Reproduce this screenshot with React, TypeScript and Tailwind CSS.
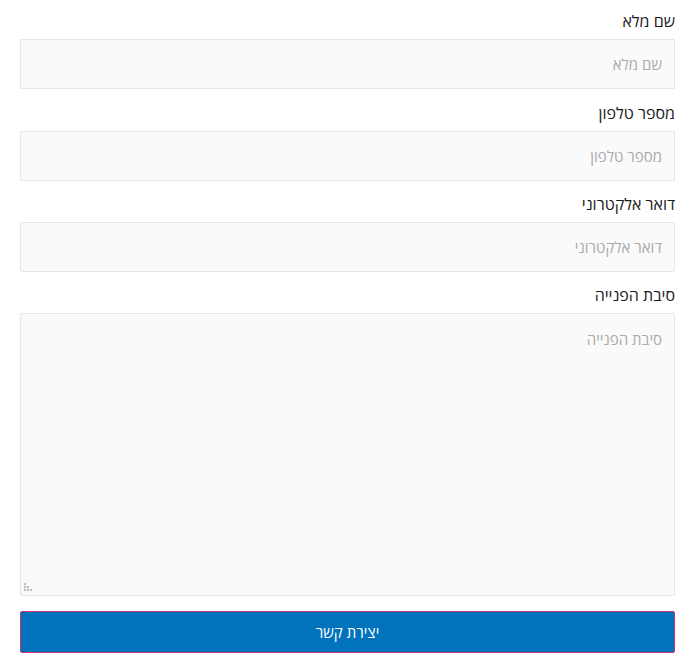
import React from "react";

const fields = [
  { label: "שם מלא", type: "text", mb: "mb-[12px]" },
  { label: "מספר טלפון", type: "tel", mb: "mb-[11px]" },
  { label: "דואר אלקטרוני", type: "email", mb: "mb-[11px]" },
];

export default function App() {
  return (
    <div
      dir="rtl"
      className="bg-white pl-[20px] pr-[22px] pt-[9px] w-[697px] h-[672px]"
      style={{ fontFamily: '"Open Sans", "Noto Sans", sans-serif' }}
    >
      <form className="flex flex-col" onSubmit={(e) => e.preventDefault()}>
        {fields.map((f) => (
          <div key={f.label} className={`flex flex-col ${f.mb}`}>
            <label className="text-[16px] leading-[24px] text-[#1a1a1a] mb-[6px]">{f.label}</label>
            <input
              type={f.type}
              dir="rtl"
              placeholder={f.label}
              className="h-[50px] bg-[#fafafa] border border-[#e6e6e6] rounded-[2px] px-[12px] text-right text-[15px] text-[#333] placeholder:text-[#aaa] outline-none"
            />
          </div>
        ))}
        <div className="flex flex-col mb-[15px]">
          <label className="text-[16px] leading-[24px] text-[#1a1a1a] mb-[6px]">סיבת הפנייה</label>
          <div className="relative">
            <textarea
              placeholder="סיבת הפנייה"
              className="block w-full h-[283px] bg-[#fafafa] border border-[#e6e6e6] rounded-[2px] px-[12px] py-[14px] text-[15px] text-[#333] placeholder:text-[#aaa] outline-none resize-none"
            />
            <svg
              className="absolute left-[4px] bottom-[4px] pointer-events-none"
              width="9"
              height="9"
              viewBox="0 0 9 9"
            >
              <rect x="0" y="0" width="2" height="2" fill="#bbb" />
              <rect x="0" y="3" width="2" height="2" fill="#bbb" />
              <rect x="3" y="3" width="2" height="2" fill="#bbb" />
              <rect x="0" y="6" width="2" height="2" fill="#bbb" />
              <rect x="3" y="6" width="2" height="2" fill="#bbb" />
              <rect x="6" y="6" width="2" height="2" fill="#bbb" />
            </svg>
          </div>
        </div>
        <button
          type="submit"
          className="h-[42px] bg-[#0073bc] border border-[#d2326a] rounded-[2px] text-white text-[15px]"
        >
          יצירת קשר
        </button>
      </form>
    </div>
  );
}
